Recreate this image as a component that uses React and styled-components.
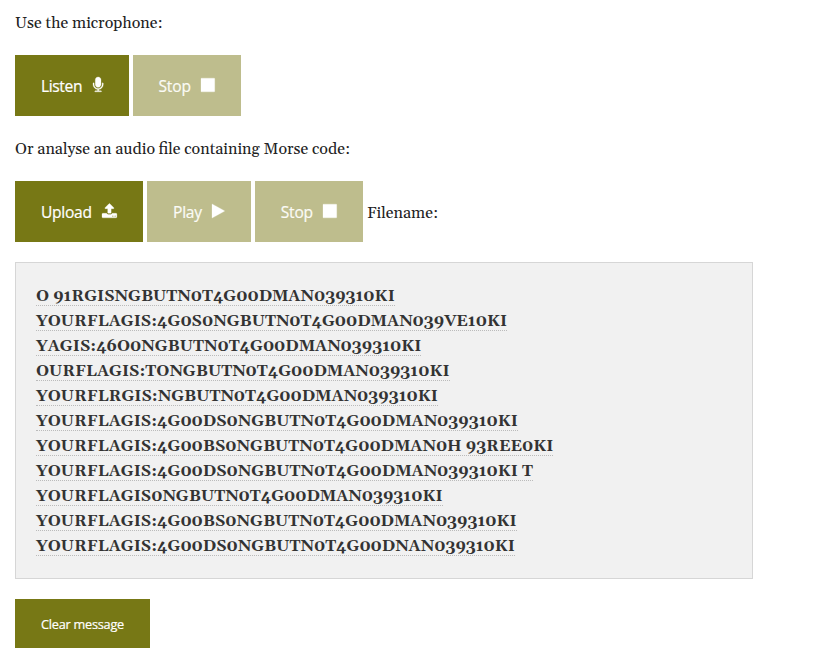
import React from "react";
import styled, { createGlobalStyle } from "styled-components";

const GlobalStyle = createGlobalStyle`
  * { box-sizing: border-box; }
  body { margin: 0; background: #fff; color: #222; font: 16px/25px Georgia, Gelasio, "Liberation Serif", serif; }
`;
const Page = styled.main`
  width: 753px;
  padding: 10px 0 0 15px;
`;
const Label = styled.p`
  margin: 0 0 20px;
  height: 25px;
  line-height: 27px;
  white-space: nowrap;
`;
const ButtonRow = styled.div`
  display: flex;
  align-items: center;
  gap: 4px;
  height: 61px;
  margin-bottom: 20px;
`;
const FileName = styled.span`
  padding-top: 3px;
`;
const Button = styled.button`
  display: inline-flex;
  align-items: center;
  justify-content: space-between;
  flex: none;
  width: ${(p) => p.$w}px;
  height: ${(p) => (p.$small ? 49 : 61)}px;
  padding: ${(p) => (p.$small ? 0 : 1)}px 26px 0 ${(p) => p.$left || 26}px;
  border: 0;
  background: ${(p) => (p.disabled ? "#bebd8d" : "#777815")};
  color: ${(p) => (p.disabled ? "#fbfbf6" : "#fff")};
  font: ${(p) => (p.$small ? 12.7 : 15.6)}px/24px "Open Sans", "Noto Sans", sans-serif;
  letter-spacing: ${(p) => p.$track || 0}px;
  -webkit-text-stroke: 0.2px currentColor;
  white-space: nowrap;
`;
const Glyph = styled.svg`
  display: block;
  flex: none;
  width: ${(p) => p.$w}px;
  height: 16px;
  margin-bottom: 2px;
  overflow: visible;
  fill: #fff;
  stroke: #fff;
  stroke-width: 30;
`;
const Output = styled.div`
  width: 738px;
  height: 317px;
  margin-bottom: 20px;
  padding: 20px;
  border: 1px solid #d6d6d6;
  background: #f1f1f1;
  color: #333;
  font-weight: bold;
`;
const Row = styled.div`
  display: flex;
  align-items: flex-start;
  height: 25px;
`;
const Decoded = styled.span`
  height: 23px;
  line-height: 27px;
  border-bottom: 1px dotted #bbb;
  white-space: nowrap;
`;

/* Each glyph is drawn on a 1792-unit em, cropped to its own width. */
const glyphs = {
  mic: {
    x: 320,
    w: 1152,
    d: "M1472 704v128q0 221-147.5 384.5t-364.5 187.5v132h256q26 0 45 19t19 45-19 45-45 19h-640q-26 0-45-19t-19-45 19-45 45-19h256v-132q-217-24-364.5-187.5t-147.5-384.5v-128q0-26 19-45t45-19 45 19 19 45v128q0 185 131.5 316.5t316.5 131.5 316.5-131.5 131.5-316.5v-128q0-26 19-45t45-19 45 19 19 45zM1216 320v512q0 132-94 226t-226 94-226-94-94-226v-512q0-132 94-226t226-94 226 94 94 226z",
  },
  upload: {
    x: 64,
    w: 1664,
    d: "M1344 1472q0-26-19-45t-45-19-45 19-19 45 19 45 45 19 45-19 19-45zm256 0q0-26-19-45t-45-19-45 19-19 45 19 45 45 19 45-19 19-45zm128-224v320q0 40-28 68t-68 28h-1472q-40 0-68-28t-28-68v-320q0-40 28-68t68-28h427q21 56 70.5 92t110.5 36h256q61 0 110.5-36t70.5-92h427q40 0 68 28t28 68zm-325-648q-17 40-59 40h-256v448q0 26-19 45t-45 19h-256q-26 0-45-19t-19-45v-448h-256q-42 0-59-40-17-39 14-69l448-448q18-19 45-19t45 19l448 448q31 30 14 69z",
  },
  play: {
    x: 192,
    w: 1408,
    d: "M1576 927l-1328 738q-23 13-39.500 3t-16.500-36v-1472q0-26 16.500-36t39.500 3l1328 738q23 13 23 31t-23 31z",
  },
  stop: {
    x: 128,
    w: 1536,
    d: "M1664 192v1408q0 26-19 45t-45 19h-1408q-26 0-45-19t-19-45v-1408q0-26 19-45t45-19h1408q26 0 45 19t19 45z",
  },
};

function Icon({ name }) {
  const g = glyphs[name];
  return (
    <Glyph $w={(g.w * 16) / 1792} viewBox={`${g.x} 0 ${g.w} 1792`} aria-hidden="true">
      <path d={g.d} />
    </Glyph>
  );
}

const lines = [
  "O 91RGISNGBUTN0T4G00DMAN039310KI",
  "YOURFLAGIS:4G0S0NGBUTN0T4G00DMAN039VE10KI",
  "YAGIS:46O0NGBUTN0T4G00DMAN039310KI",
  "OURFLAGIS:TONGBUTN0T4G00DMAN039310KI",
  "YOURFLRGIS:NGBUTN0T4G00DMAN039310KI",
  "YOURFLAGIS:4G00DS0NGBUTN0T4G00DMAN039310KI",
  "YOURFLAGIS:4G00BS0NGBUTN0T4G00DMAN0H 93REE0KI",
  "YOURFLAGIS:4G00DS0NGBUTN0T4G00DMAN039310KI T",
  "YOURFLAGIS0NGBUTN0T4G00DMAN039310KI",
  "YOURFLAGIS:4G00BS0NGBUTN0T4G00DMAN039310KI",
  "YOURFLAGIS:4G00DS0NGBUTN0T4G00DNAN039310KI",
];

export default function App() {
  return (
    <>
      <GlobalStyle />
      <Page>
        <Label>Use the microphone:</Label>
        <ButtonRow>
          <Button $w={114} $track={-0.38}>Listen<Icon name="mic" /></Button>
          <Button $w={108} $left={25.5} $track={-0.2} disabled>Stop<Icon name="stop" /></Button>
        </ButtonRow>
        <Label>Or analyse an audio file containing Morse code:</Label>
        <ButtonRow>
          <Button $w={128} $track={-0.3}>Upload<Icon name="upload" /></Button>
          <Button $w={104} $track={-0.25} disabled>Play<Icon name="play" /></Button>
          <Button $w={108} $left={25.7} $track={-0.2} disabled>Stop<Icon name="stop" /></Button>
          <FileName>Filename:</FileName>
        </ButtonRow>
        <Output>
          {lines.map((line) => (
            <Row key={line}><Decoded>{line}</Decoded></Row>
          ))}
        </Output>
        <Button $w={135} $small $track={-0.22}>Clear message</Button>
      </Page>
    </>
  );
}
